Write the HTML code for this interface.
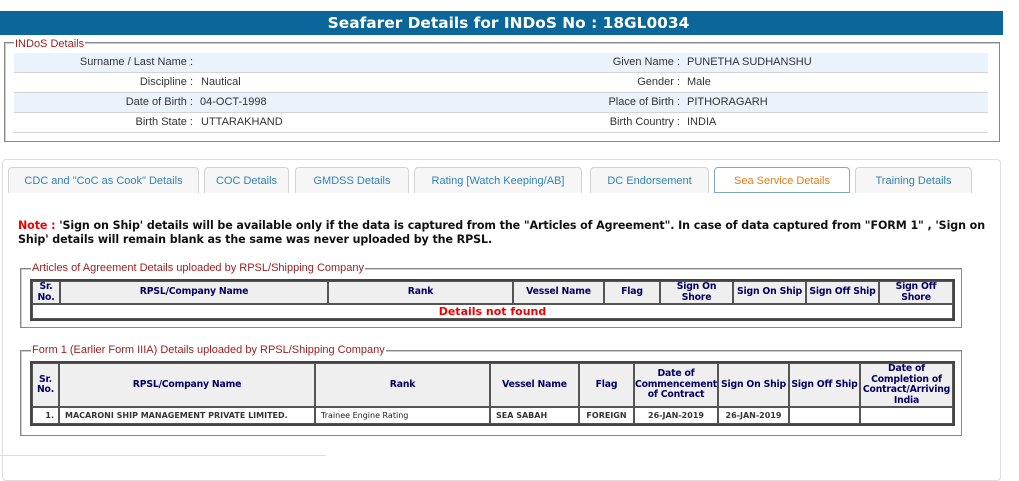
<!DOCTYPE html>
<html><head><style>
body{margin:0;width:1019px;height:460px;background:#fff;position:relative;overflow:hidden;font-family:"Liberation Sans",Arial,sans-serif}
.a{position:absolute}
.hdr{left:0;top:11px;width:1003px;height:24px;background:#0b6699;color:#fff;font:bold 15.4px "DejaVu Sans",Verdana,sans-serif;text-align:center;line-height:24px;padding-left:14px;box-sizing:border-box}
.fs{border:1px solid #888;box-shadow:inset 1px 1px 0 #ccc}
.lg{background:#fff;color:#9b1c1c;font-size:11px;padding:0 1px;line-height:12px}
.row{left:14px;width:974px;height:19px;border-bottom:1px solid #d4d4d4;font-size:11px;color:#333;line-height:19px}
.row.b{background:#eaf2fb}
.row span{position:absolute}
.l{text-align:right}
.tab{top:167px;height:26px;border:1px solid #d3d3d3;border-bottom:none;border-radius:4px 4px 0 0;background:#f6f6f6;color:#2e83b9;font-size:11px;text-align:center;line-height:27px;box-sizing:border-box}
.tab.act{background:#fff;border:1px solid #7ea7c9;color:#e47c1a}
table{border-collapse:separate;border-spacing:0;border:2px solid #444;position:absolute;table-layout:fixed;font-family:"DejaVu Sans",Verdana,sans-serif}
td,th{border:1px solid #555;padding:0;text-align:center;overflow:hidden;white-space:nowrap}
th{background:#efefef;color:#000066;font-size:9.3px;font-weight:bold;line-height:10.5px;letter-spacing:-0.2px}
td{font-size:8px;font-weight:bold;color:#333}
.leg{font-size:11px;color:#9b1c1c;background:#fff;padding:0 1px;line-height:12px}
</style></head><body>
<div class="a hdr">Seafarer Details for INDoS No : 18GL0034</div>

<div class="a fs" style="left:4px;top:42px;width:994px;height:98px"></div>
<div class="a lg" style="left:14px;top:38px">INDoS Details</div>
<div class="a row b" style="top:53px"><span class="l" style="right:795px">Surname / Last Name :</span><span class="l" style="right:308px">Given Name :</span><span style="left:673px">PUNETHA SUDHANSHU</span></div>
<div class="a row" style="top:73px"><span class="l" style="right:795px">Discipline :</span><span style="left:187px">Nautical</span><span class="l" style="right:308px">Gender :</span><span style="left:673px">Male</span></div>
<div class="a row b" style="top:93px"><span class="l" style="right:795px">Date of Birth :</span><span style="left:186px">04-OCT-1998</span><span class="l" style="right:308px">Place of Birth :</span><span style="left:673px">PITHORAGARH</span></div>
<div class="a row" style="top:113px"><span class="l" style="right:795px">Birth State :</span><span style="left:187px">UTTARAKHAND</span><span class="l" style="right:308px">Birth Country :</span><span style="left:673px">INDIA</span></div>

<div class="a" style="left:2px;top:159px;width:997px;height:320px;border:1px solid #ddd;border-radius:4px"></div>
<div class="a" style="left:0;top:455px;width:326px;height:1px;background:#ddd"></div>
<div class="a tab" style="left:8px;width:191px">CDC and "CoC as Cook" Details</div>
<div class="a tab" style="left:204px;width:85px">COC Details</div>
<div class="a tab" style="left:295px;width:114px">GMDSS Details</div>
<div class="a tab" style="left:414px;width:168px">Rating [Watch Keeping/AB]</div>
<div class="a tab" style="left:590px;width:119px">DC Endorsement</div>
<div class="a tab act" style="left:714px;width:136px">Sea Service Details</div>
<div class="a tab" style="left:855px;width:117px">Training Details</div>

<div class="a" style="left:18px;top:219px;width:980px;font:bold 11.1px 'DejaVu Sans',Verdana,sans-serif;line-height:14px;color:#111;letter-spacing:-0.1px"><span style="color:#e00">Note :</span> 'Sign on Ship' details will be available only if the data is captured from the "Articles of Agreement". In case of data captured from "FORM 1" , 'Sign on Ship' details will remain blank as the same was never uploaded by the RPSL.</div>

<div class="a fs" style="left:20px;top:268px;width:940px;height:58px"></div>
<div class="a leg" style="left:31px;top:262px">Articles of Agreement Details uploaded by RPSL/Shipping Company</div>
<table style="left:30px;top:279px;width:921px">
<colgroup><col style="width:28px"><col style="width:268px"><col style="width:185px"><col style="width:91px"><col style="width:56px"><col style="width:73px"><col style="width:73px"><col style="width:73px"><col style="width:74px"></colgroup>
<tr style="height:21px"><th>Sr.<br>No.</th><th>RPSL/Company Name</th><th>Rank</th><th>Vessel Name</th><th>Flag</th><th>Sign On<br>Shore</th><th>Sign On Ship</th><th>Sign Off Ship</th><th>Sign Off<br>Shore</th></tr>
<tr style="height:14px"><td colspan="9" style="color:#e00;font-size:11px;line-height:13px">Details not found</td></tr>
</table>

<div class="a fs" style="left:20px;top:350px;width:940px;height:84px"></div>
<div class="a leg" style="left:31px;top:344px">Form 1 (Earlier Form IIIA) Details uploaded by RPSL/Shipping Company</div>
<table style="left:30px;top:361px;width:921px">
<colgroup><col style="width:27px"><col style="width:256px"><col style="width:175px"><col style="width:89px"><col style="width:55px"><col style="width:84px"><col style="width:71px"><col style="width:71px"><col style="width:93px"></colgroup>
<tr style="height:44px"><th>Sr.<br>No.</th><th>RPSL/Company Name</th><th>Rank</th><th>Vessel Name</th><th>Flag</th><th>Date of<br>Commencement<br>of Contract</th><th>Sign On Ship</th><th>Sign Off Ship</th><th>Date of<br>Completion of<br>Contract/Arriving<br>India</th></tr>
<tr style="height:17px"><td style="text-align:right;padding-right:4px">1.</td><td style="text-align:left;padding-left:5px">MACARONI SHIP MANAGEMENT PRIVATE LIMITED.</td><td style="text-align:left;padding-left:5px;font-weight:normal;color:#222">Trainee Engine Rating</td><td style="text-align:left;padding-left:5px">SEA SABAH</td><td>FOREIGN</td><td>26-JAN-2019</td><td>26-JAN-2019</td><td></td><td></td></tr>
</table>
</body></html>
